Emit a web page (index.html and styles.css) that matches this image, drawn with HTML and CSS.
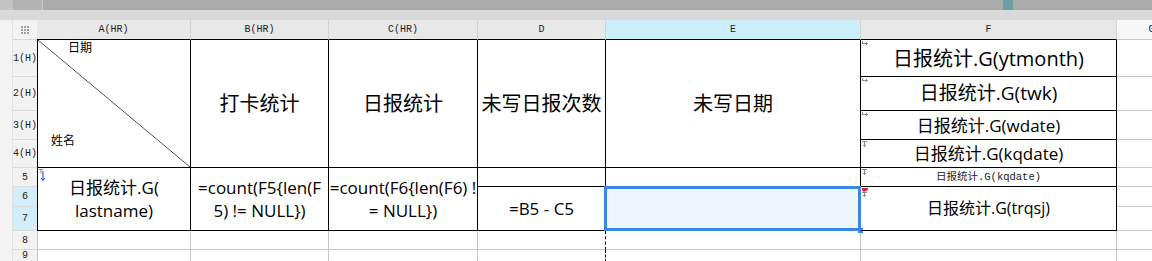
FILE: index.html
```html
<!DOCTYPE html>
<html lang="zh-CN">
<head>
    <meta charset="UTF-8">
    <meta name="viewport" content="width=device-width, initial-scale=1.0">
    <title>日报统计</title>
    <link rel="stylesheet" href="styles.css">
</head>
<body>
    <div class="topbar">
        <div class="seg1"></div>
        <div class="seg2"></div>
        <div class="thumb"></div>
    </div>
    <div class="toolstrip"></div>

    <div class="grid">
        <div class="gutter"></div>

        <!-- 列标题 -->
        <div class="corner">
            <svg width="8" height="8" viewBox="0 0 8 8">
                <g fill="#a0a0a0">
                    <rect x="0" y="0" width="2" height="2"/><rect x="3" y="0" width="2" height="2"/><rect x="6" y="0" width="2" height="2"/>
                    <rect x="0" y="3" width="2" height="2"/><rect x="3" y="3" width="2" height="2"/><rect x="6" y="3" width="2" height="2"/>
                    <rect x="0" y="6" width="2" height="2"/><rect x="3" y="6" width="2" height="2"/><rect x="6" y="6" width="2" height="2"/>
                </g>
            </svg>
        </div>
        <div class="colhead first">A(HR)</div>
        <div class="colhead">B(HR)</div>
        <div class="colhead">C(HR)</div>
        <div class="colhead">D</div>
        <div class="colhead active">E</div>
        <div class="colhead">F</div>
        <div class="colhead out">G</div>

        <!-- 第1行 -->
        <div class="rowhead">1(H)</div>
        <div class="cell first span4 diag">
            <span class="top">日期</span>
            <span class="bottom">姓名</span>
        </div>
        <div class="cell span4 title">打卡统计</div>
        <div class="cell span4 title">日报统计</div>
        <div class="cell span4 title">未写日报次数</div>
        <div class="cell span4 title">未写日期</div>
        <div class="cell f1">
            <svg class="mark" width="7" height="5" viewBox="0 0 7 5"><path d="M0.5 0v3M0.5 2.5h5M4 1l1.5 1.5L4 4" stroke="#8a8a8a" fill="none"/></svg>
            日报统计.G(ytmonth)
        </div>
        <div class="blank"></div>

        <!-- 第2-4行 -->
        <div class="rowhead">2(H)</div>
        <div class="cell f2">
            <svg class="mark" width="7" height="5" viewBox="0 0 7 5"><path d="M0.5 0v3M0.5 2.5h5M4 1l1.5 1.5L4 4" stroke="#8a8a8a" fill="none"/></svg>
            日报统计.G(twk)
        </div>
        <div class="blank"></div>

        <div class="rowhead">3(H)</div>
        <div class="cell f3">
            <svg class="mark" width="7" height="5" viewBox="0 0 7 5"><path d="M0.5 0v3M0.5 2.5h5M4 1l1.5 1.5L4 4" stroke="#8a8a8a" fill="none"/></svg>
            日报统计.G(wdate)
        </div>
        <div class="blank"></div>

        <div class="rowhead">4(H)</div>
        <div class="cell f3">
            <svg class="mark" width="5" height="6" viewBox="0 0 5 6"><path d="M0 0.5h5M2.5 0.5v5M1 4l1.5 1.5L4 4" stroke="#8a8a8a" fill="none"/></svg>
            日报统计.G(kqdate)
        </div>
        <div class="blank"></div>

        <!-- 第5行 -->
        <div class="rowhead">5</div>
        <div class="cell first span3">
            <svg class="mark" width="7" height="13" viewBox="0 0 7 13">
                <path d="M0 0.5h4M2 0.5v4" stroke="#8a8a8a" fill="none"/>
                <path d="M4 2v9M2 9l2 2.5L6 9" stroke="#1a3fe0" fill="none"/>
            </svg>
            <span>日报统计.G(<br>lastname)</span>
        </div>
        <div class="cell span3"><span>=count(F5{len(F<br>5) != NULL})</span></div>
        <div class="cell span3"><span>=count(F6{len(F6) !<br>= NULL})</span></div>
        <div class="cell"></div>
        <div class="cell"></div>
        <div class="cell tiny">
            <svg class="mark" width="5" height="6" viewBox="0 0 5 6"><path d="M0 0.5h5M2.5 0.5v5M1 4l1.5 1.5L4 4" stroke="#8a8a8a" fill="none"/></svg>
            日报统计.G(kqdate)
        </div>
        <div class="blank"></div>

        <!-- 第6-7行 -->
        <div class="rowhead active">6</div>
        <div class="cell span2">=B5 - C5</div>
        <div class="cell span2 sel"></div>
        <div class="cell span2 f6">
            <svg class="mark" width="7" height="9" viewBox="0 0 7 9">
                <path d="M0 4.5h5M2.5 4.5v4M1 7l1.5 1.5L4 7" stroke="#8a8a8a" fill="none"/>
                <polygon points="0,0 6,0 6,1.5 3.5,3.5 1,3.5 0,2" fill="#e8203f"/>
            </svg>
            日报统计.G(trqsj)
        </div>
        <div class="blank"></div>

        <div class="rowhead active">7</div>
        <div class="blank"></div>

        <!-- 空行 -->
        <div class="rowhead">8</div>
        <div class="blank first"></div>
        <div class="blank"></div>
        <div class="blank"></div>
        <div class="blank pagebreak"></div>
        <div class="blank"></div>
        <div class="blank"></div>
        <div class="blank"></div>

        <div class="rowhead">9</div>
        <div class="blank first"></div>
        <div class="blank"></div>
        <div class="blank"></div>
        <div class="blank pagebreak"></div>
        <div class="blank"></div>
        <div class="blank"></div>
        <div class="blank"></div>
    </div>
</body>
</html>
```

FILE: styles.css
```css
/* 基本设置 */
* {
    margin: 0;
    padding: 0;
    box-sizing: border-box;
}

body {
    width: 1152px;
    height: 261px;
    overflow: hidden;
    background-color: #FFFFFF;
    color: #000000;
    font-family: "Open Sans", "Noto Sans CJK SC", sans-serif;
}

/* 顶部工具条 */
.topbar {
    display: flex;
    height: 10px;
    background-color: #AAAAAA;
}

.topbar .seg1 {
    width: 13px;
    background-color: #C3C3C3;
}

.topbar .seg2 {
    width: 30px;
    background-color: #B3B3B3;
    border-right: 1px solid #C9C9C9;
}

.topbar .thumb {
    width: 10px;
    margin-left: 960px;
    background-color: #6F9CA9;
}

.toolstrip {
    height: 10px;
    background-color: #D9D9D9;
}

/* 表格 */
.grid {
    display: grid;
    grid-template-columns: 13px 24px 154px 138px 149px 128px 255px 256px 70px;
    grid-template-rows: 20px 37px 34px 29px 28px 19px 20px 24px 19px 1fr;
    height: 241px;
}

.gutter {
    grid-column: 1;
    grid-row: 1 / -1;
    background-color: #F3F3F3;
    border-right: 1px solid #E2E2E2;
}

.corner {
    display: flex;
    align-items: center;
    justify-content: center;
    background-color: #F3F3F3;
    border-bottom: 1px solid #D6D6D6;
}

.colhead {
    display: flex;
    align-items: center;
    justify-content: center;
    background-color: #E8E8E8;
    border-right: 1px solid #D3D3D3;
    border-bottom: 1px solid #000000;
    font-family: "Liberation Mono", monospace;
    font-size: 10px;
    color: #222222;
}

.colhead.active {
    background-color: #CDEFFA;
}

.colhead.out {
    background-color: #F7F7F7;
    border-bottom-color: #C8C8C8;
}

.rowhead {
    display: flex;
    align-items: center;
    justify-content: center;
    background-color: #F2F2F2;
    border-bottom: 1px solid #DADADA;
    font-family: "Liberation Mono", monospace;
    font-size: 10px;
    color: #222222;
}

.rowhead.active {
    background-color: #D2EEF9;
}

.cell {
    position: relative;
    display: flex;
    align-items: center;
    justify-content: center;
    text-align: center;
    border-right: 1px solid #000000;
    border-bottom: 1px solid #000000;
    font-size: 17px;
    line-height: 23px;
}

.cell.first {
    border-left: 1px solid #000000;
}

.blank {
    border-right: 1px solid #C8C8C8;
    border-bottom: 1px solid #C8C8C8;
}

.blank.first {
    border-left: 1px solid #C8C8C8;
}

.blank.pagebreak {
    border-right: 1px dashed #000000;
}

.span4 {
    grid-row: span 4;
}

.span3 {
    grid-row: span 3;
}

.span2 {
    grid-row: span 2;
}

/* 字号 */
.title {
    font-size: 20px;
}

.f1 {
    font-size: 20px;
}

.f2 {
    font-size: 19px;
}

.f3 {
    font-size: 17px;
}

.f6 {
    font-size: 16px;
}

.tiny {
    font-family: "Liberation Mono", "Noto Sans CJK SC", monospace;
    font-size: 10.5px;
    color: #222222;
}

/* 斜线表头 */
.diag {
    flex-direction: column;
    align-items: flex-start;
    justify-content: space-between;
    font-size: 12px;
    line-height: 16px;
    background: linear-gradient(to top right, transparent calc(50% - 0.7px), #444444 50%, transparent calc(50% + 0.7px));
}

.diag .top {
    padding-left: 30px;
}

.diag .bottom {
    padding-left: 13px;
    margin-bottom: 18px;
}

/* 角标 */
.mark {
    position: absolute;
    top: 1px;
    left: 1px;
}

/* 选中单元格 */
.sel {
    background-color: #EDF5FD;
}

.sel::before {
    content: "";
    position: absolute;
    top: -1px;
    left: -2px;
    right: -1px;
    bottom: -1px;
    border: 3px solid #3B86E9;
}

.sel::after {
    content: "";
    position: absolute;
    right: -3px;
    bottom: -3px;
    width: 5px;
    height: 5px;
    background-color: #3B86E9;
}
```
